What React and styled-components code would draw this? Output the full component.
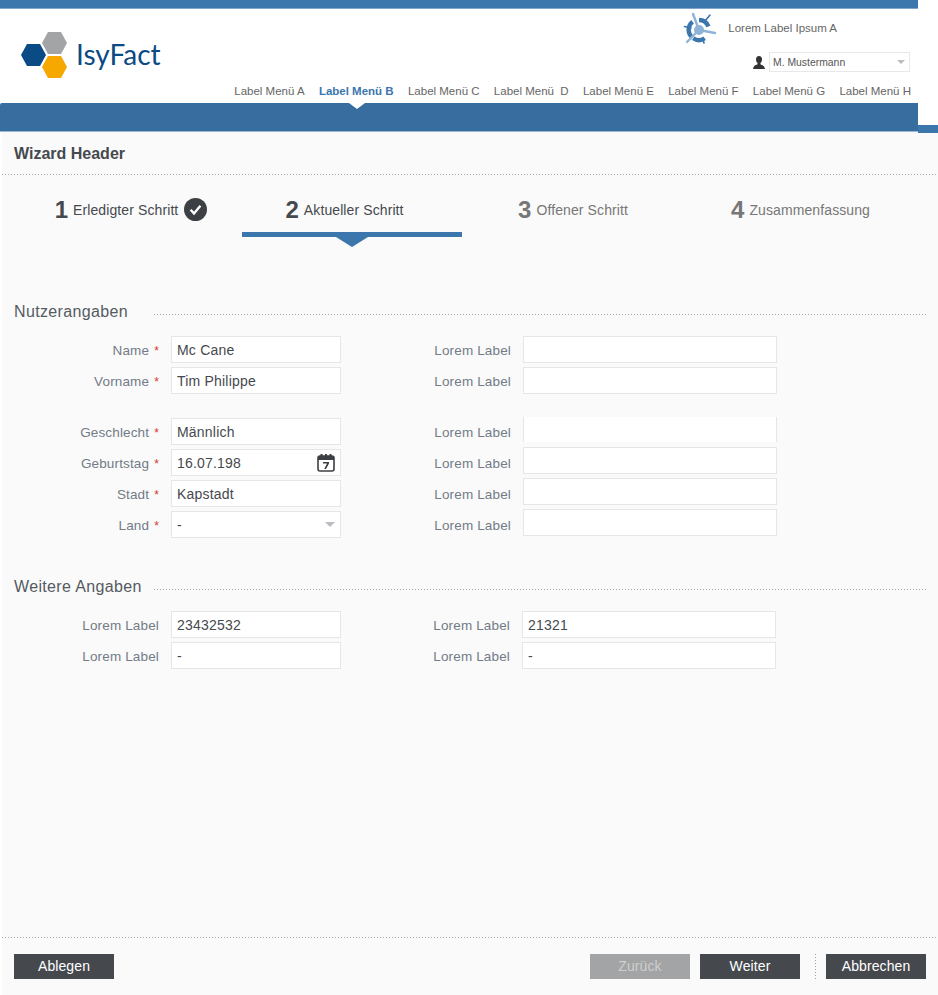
import React from 'react'
import styled, { createGlobalStyle, css } from 'styled-components'

const GlobalStyle = createGlobalStyle`
  html, body { margin: 0; padding: 0; background: #fff; }
  * { box-sizing: border-box; }
`

const dottedLine = css`
  background-image: repeating-linear-gradient(to right, #a8a8a8 0 1px, transparent 1px 3px);
  background-repeat: no-repeat;
  background-size: 100% 1px;
`

const Page = styled.div`
  position: relative;
  width: 938px;
  height: 995px;
  overflow: hidden;
  display: flex;
  flex-direction: column;
  font-family: "Liberation Sans", Arial, sans-serif;
  color: #45494e;
`
const TopBar = styled.div`
  width: 918px;
  height: 9px;
  background: #3b76ad;
  border-bottom: 1px solid #7fa6cc;
`
const Header = styled.header`
  width: 918px;
  height: 94px;
  display: flex;
  justify-content: space-between;
  background: #fff;
`
const Logo = styled.div`
  display: flex;
  align-items: center;
  gap: 6px;
  height: 47px;
  margin: 23px 0 0 21px;
`
const LogoText = styled.span`
  font-family: Lato, "Open Sans", sans-serif;
  font-size: 28px;
  line-height: 1;
  color: #0b4a84;
  margin-top: -3px;
`
const HeaderRight = styled.div`
  display: flex;
  flex-direction: column;
  align-items: flex-end;
  padding-right: 7px;
`
const Brand = styled.div`
  display: flex;
  align-items: center;
  gap: 11px;
  height: 34px;
  margin: 2px 74px 0 0;
  font-size: 11.5px;
  color: #666;
`
const UserRow = styled.div`
  display: flex;
  align-items: center;
  gap: 4px;
  margin: 7px 1px 0 0;
`
const UserSelect = styled.div`
  position: relative;
  width: 141px;
  height: 20px;
  padding-left: 3px;
  line-height: 19px;
  font-size: 10.4px;
  color: #555;
  background: #fff;
  border: 1px solid #e6e8ea;
`
const Caret = styled.span`
  position: absolute;
  top: ${p => p.$top}px;
  right: ${p => p.$right}px;
  width: 0;
  height: 0;
  border-left: ${p => p.$size}px solid transparent;
  border-right: ${p => p.$size}px solid transparent;
  border-top: ${p => p.$size}px solid #b9bcc0;
`
const Menu = styled.nav`
  display: flex;
  gap: 14.3px;
  margin-top: 12px;
  font-size: 11.5px;
  line-height: 14px;
  white-space: nowrap;
`
const MenuItem = styled.span`
  color: ${p => (p.$active ? '#3b76ad' : '#666')};
  font-weight: ${p => (p.$active ? 700 : 400)};
`
const NavBar = styled.div`
  position: relative;
  width: 918px;
  height: 29px;
  background: #386d9f;
  border-bottom: 1px solid #9db6d0;
  border-top-left-radius: 2px;
  &::before {
    content: '';
    position: absolute;
    top: 0;
    left: 349px;
    border-left: 8px solid transparent;
    border-right: 8px solid transparent;
    border-top: 6px solid #fff;
  }
`
const SideTab = styled.div`
  position: absolute;
  top: 125px;
  left: 918px;
  width: 20px;
  height: 8px;
  background: #3b76ad;
`
const Content = styled.main`
  flex: 1;
  margin-left: 2px;
  display: flex;
  flex-direction: column;
  background-color: #fafafa;
`
const WizardHeader = styled.h1`
  margin: 0;
  height: 43px;
  padding: 12px 0 0 12px;
  font-size: 16px;
  line-height: 19px;
  font-weight: 700;
  color: #45494e;
  ${dottedLine}
  background-position: left bottom;
`
const Steps = styled.div`
  display: grid;
  grid-template-columns: 220px 220px 222px 222px;
  margin: 0 0 0 20px;
  height: 62px;
`
const Step = styled.div`
  position: relative;
  display: flex;
  align-items: center;
  justify-content: center;
  gap: 6px;
  height: 62px;
  padding: 12px ${p => p.$right || 0}px 0 ${p => p.$left || 0}px;
  border-bottom: 5px solid ${p => (p.$current ? '#3b76ad' : 'transparent')};
  color: ${p => (p.$open ? '#777' : '#45494e')};
  font-size: 14px;
  letter-spacing: 0.1px;
  ${p => p.$current && `
    &::after {
      content: '';
      position: absolute;
      left: 94px;
      bottom: -15px;
      border-left: 16px solid transparent;
      border-right: 16px solid transparent;
      border-top: 10px solid #3b76ad;
    }
  `}
`
const StepNumber = styled.span`
  font-size: 24px;
  line-height: 28px;
  font-weight: 700;
  margin-right: -1px;
`
const Section = styled.section`
  margin: ${p => p.$top}px 0 0 12px;
`
const SectionTitle = styled.div`
  display: flex;
  align-items: center;
  height: 20px;
  margin-right: 12px;
  font-size: 16px;
  letter-spacing: 0.35px;
  color: #555b62;
  white-space: nowrap;
  span {
    width: 140px;
  }
  &::after {
    content: '';
    flex: 1;
    height: 1px;
    margin-top: 4px;
    ${dottedLine}
  }
`
const FormGrid = styled.div`
  display: grid;
  grid-template-columns: 145px 170px ${p => p.$mid}px 254px;
  column-gap: 12px;
  row-gap: 4px;
  margin-top: 14px;
`
const Label = styled.div`
  display: flex;
  align-items: center;
  justify-content: flex-end;
  gap: 5px;
  padding-top: 2px;
  font-size: 13.5px;
  letter-spacing: 0.15px;
  color: #727b87;
  white-space: nowrap;
`
const Star = styled.span`
  color: #d3382a;
  font-size: 12px;
  line-height: 12px;
`
const Field = styled.div`
  position: relative;
  height: 27px;
  padding-left: 5px;
  font-size: 14px;
  letter-spacing: 0.2px;
  line-height: 26px;
  color: #45494e;
  background: #fff;
  border: 1px solid #e4e6e8;
  margin-top: ${p => (p.$lift ? '-2px' : '0')};
  ${p => p.$cut && `
    height: 25px;
    margin-top: -1px;
    border-top: none;
    border-bottom: none;
  `}
`
const Spacer = styled.div`
  grid-column: 1 / -1;
  height: 16px;
`
const FieldIcon = styled.svg`
  position: absolute;
  top: 3px;
  right: 5px;
`
const Filler = styled.div`
  flex: 1;
`
const Footer = styled.footer`
  display: flex;
  align-items: center;
  justify-content: space-between;
  height: 58px;
  padding: 0 12px;
  ${dottedLine}
  background-position: left top;
`
const ButtonGroup = styled.div`
  display: flex;
  align-items: center;
  gap: 10px;
`
const Button = styled.button`
  width: 100px;
  height: 25px;
  padding: 0;
  border: none;
  font-family: inherit;
  font-size: 14px;
  letter-spacing: 0.1px;
  color: ${p => (p.disabled ? '#cfcfcf' : '#fff')};
  background: ${p => (p.disabled ? '#a3a4a5' : '#45494e')};
`
const Divider = styled.div`
  width: 1px;
  height: 25px;
  margin-left: 5px;
  background-image: repeating-linear-gradient(to bottom, #a0a0a0 0 1px, transparent 1px 3px);
`

function LogoMark() {
  return (
    <svg width="49" height="47" viewBox="0 0 49 47">
      <polygon points="0,23 6,12 19,12 25,23 19,34 6,34" fill="#0a4a85" />
      <polygon points="21,11 27,0 40,0 46,11 40,22 27,22" fill="#a3a4a6" />
      <polygon points="21,35 27,24 40,24 46,35 40,46 27,46" fill="#f7a800" />
    </svg>
  )
}

function NetworkIcon() {
  return (
    <svg width="34" height="32" viewBox="0 0 34 32">
      <g fill="none" stroke="#3b76ad" strokeWidth="4.4">
        <path d="M9.6 9.8 A10 10 0 0 0 9.6 25.7" />
        <path d="M16 8 A10 10 0 0 1 25.4 14.6" />
        <path d="M10.3 26.2 A10 10 0 0 0 21.7 26.2" />
      </g>
      <g stroke="#3b76ad" strokeWidth="1.6" strokeLinecap="round">
        <line x1="1.5" y1="14.5" x2="8" y2="16" />
        <line x1="27" y1="3" x2="22" y2="9" />
        <line x1="21" y1="31" x2="19.5" y2="26" />
      </g>
      <g stroke="#8fb3d6" strokeWidth="2.4" strokeLinecap="round">
        <line x1="10" y1="2" x2="16" y2="18" />
        <line x1="32" y1="21" x2="16" y2="18" />
        <line x1="4" y1="30" x2="16" y2="18" />
      </g>
      <circle cx="16" cy="18" r="5" fill="#8fb3d6" />
    </svg>
  )
}

function PersonIcon() {
  return (
    <svg width="12" height="13" viewBox="0 0 12 13">
      <ellipse cx="6" cy="3.6" rx="3" ry="3.6" fill="#333" />
      <path d="M4.6 7 L7.4 7 L7.6 8.6 Q11.6 9.4 12 13 L0 13 Q0.4 9.4 4.4 8.6 Z" fill="#333" />
    </svg>
  )
}

function CheckBadge() {
  return (
    <svg width="23" height="23" viewBox="0 0 23 23">
      <circle cx="11.5" cy="11.5" r="11.5" fill="#3c3f43" />
      <path d="M6.6 11.8 L10 15.4 L16.4 7.8" fill="none" stroke="#fff" strokeWidth="2.4" />
    </svg>
  )
}

function CalendarIcon() {
  return (
    <FieldIcon width="18" height="19" viewBox="0 0 18 19">
      <rect x="1" y="3" width="16" height="15" rx="2" fill="none" stroke="#3c3f43" strokeWidth="1.6" />
      <rect x="1" y="3" width="16" height="4" fill="#3c3f43" />
      <rect x="3.5" y="1" width="2" height="3" fill="#3c3f43" />
      <rect x="8" y="1" width="2" height="3" fill="#3c3f43" />
      <rect x="12.5" y="1" width="2" height="3" fill="#3c3f43" />
      <path d="M6 9 H12 V10.4 L9 16 H7.2 L10 10.6 H6 Z" fill="#3c3f43" />
    </FieldIcon>
  )
}

const menuItems = ['Label Menü A', 'Label Menü B', 'Label Menü C', 'Label Menü\u00a0 D', 'Label Menü E', 'Label Menü F', 'Label Menü G', 'Label Menü H']

function App() {
  return (
    <Page>
      <GlobalStyle />
      <TopBar />
      <Header>
        <Logo>
          <LogoMark />
          <LogoText>IsyFact</LogoText>
        </Logo>
        <HeaderRight>
          <Brand>
            <NetworkIcon />
            <span>Lorem Label Ipsum A</span>
          </Brand>
          <UserRow>
            <PersonIcon />
            <UserSelect>
              M. Mustermann
              <Caret $top={7} $right={4} $size={4} />
            </UserSelect>
          </UserRow>
          <Menu>
            {menuItems.map((item, i) => (
              <MenuItem key={item} $active={i === 1}>{item}</MenuItem>
            ))}
          </Menu>
        </HeaderRight>
      </Header>
      <NavBar />
      <SideTab />
      <Content>
        <WizardHeader>Wizard Header</WizardHeader>
        <Steps>
          <Step $right={2}>
            <StepNumber>1</StepNumber>
            <span>Erledigter Schritt</span>
            <CheckBadge />
          </Step>
          <Step $current $right={15}>
            <StepNumber>2</StepNumber>
            <span>Aktueller Schritt</span>
          </Step>
          <Step $open>
            <StepNumber>3</StepNumber>
            <span>Offener Schritt</span>
          </Step>
          <Step $open $left={11}>
            <StepNumber>4</StepNumber>
            <span>Zusammenfassung</span>
          </Step>
        </Steps>

        <Section $top={65}>
          <SectionTitle><span>Nutzerangaben</span></SectionTitle>
          <FormGrid $mid={158}>
            <Label>Name <Star>*</Star></Label>
            <Field>Mc Cane</Field>
            <Label>Lorem Label</Label>
            <Field />
            <Label>Vorname <Star>*</Star></Label>
            <Field>Tim Philippe</Field>
            <Label>Lorem Label</Label>
            <Field />
            <Spacer />
            <Label>Geschlecht <Star>*</Star></Label>
            <Field>Männlich</Field>
            <Label>Lorem Label</Label>
            <Field $cut />
            <Label>Geburtstag <Star>*</Star></Label>
            <Field>16.07.198<CalendarIcon /></Field>
            <Label>Lorem Label</Label>
            <Field $lift />
            <Label>Stadt <Star>*</Star></Label>
            <Field>Kapstadt</Field>
            <Label>Lorem Label</Label>
            <Field $lift />
            <Label>Land <Star>*</Star></Label>
            <Field>-<Caret $top={10} $right={5} $size={5} /></Field>
            <Label>Lorem Label</Label>
            <Field $lift />
          </FormGrid>
        </Section>

        <Section $top={39}>
          <SectionTitle><span>Weitere Angaben</span></SectionTitle>
          <FormGrid $mid={157}>
            <Label>Lorem Label</Label>
            <Field>23432532</Field>
            <Label>Lorem Label</Label>
            <Field>21321</Field>
            <Label>Lorem Label</Label>
            <Field>-</Field>
            <Label>Lorem Label</Label>
            <Field>-</Field>
          </FormGrid>
        </Section>

        <Filler />
        <Footer>
          <Button>Ablegen</Button>
          <ButtonGroup>
            <Button disabled>Zurück</Button>
            <Button>Weiter</Button>
            <Divider />
            <Button>Abbrechen</Button>
          </ButtonGroup>
        </Footer>
      </Content>
    </Page>
  )
}

export default App
